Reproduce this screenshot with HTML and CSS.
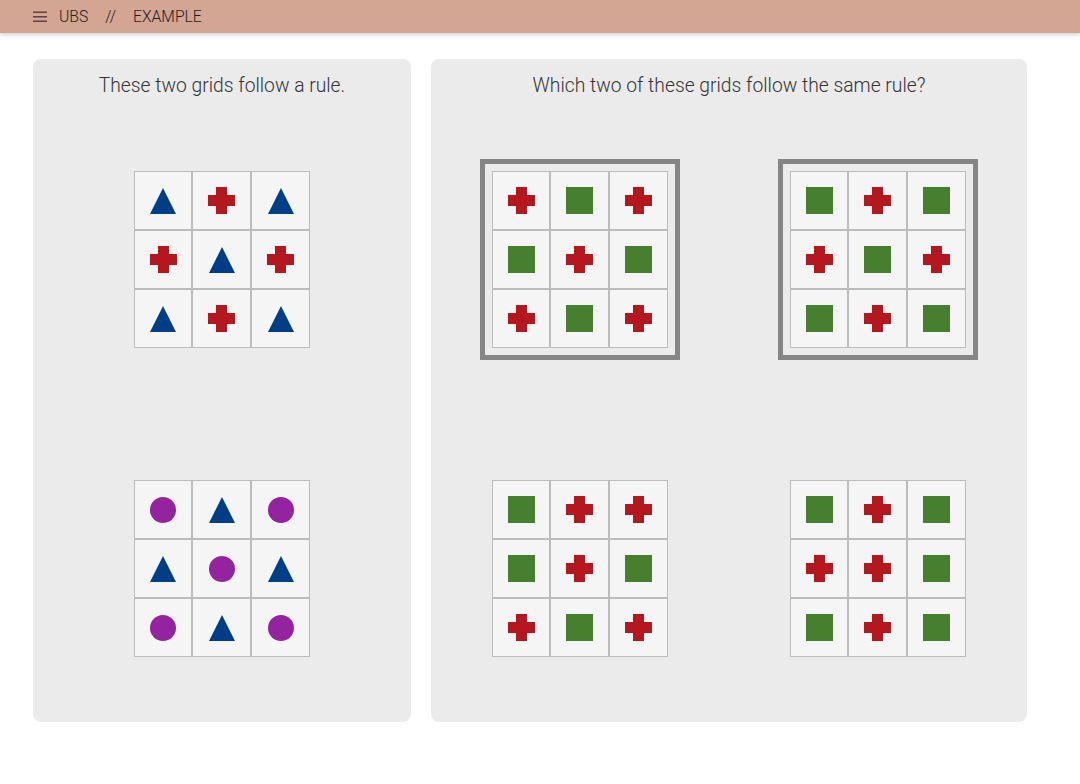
FILE: index.html
```html
<!DOCTYPE html>
<html lang="en">
<head>
  <meta charset="UTF-8" />
  <meta name="viewport" content="width=device-width, initial-scale=1.0"/>
  <title>UBS // Example</title>
  <link rel="stylesheet" href="styles.css">
</head>
<body>
  <header class="topbar">
    <svg class="menu-icon" width="14" height="12" viewBox="0 0 14 12">
      <rect x="0" y="0.5" width="14" height="1.5" />
      <rect x="0" y="5" width="14" height="1.5" />
      <rect x="0" y="9.5" width="14" height="1.5" />
    </svg>
    <span class="crumb">UBS</span>
    <span class="crumb sep">//</span>
    <span class="crumb">EXAMPLE</span>
  </header>

  <main class="board">
    <section class="panel panel-rule">
      <h2>These two grids follow a rule.</h2>
      <div class="grids one-col">
        <div class="frame">
          <div class="grid">
            <div class="cell"><i class="tri"></i></div>
            <div class="cell"><i class="cross"></i></div>
            <div class="cell"><i class="tri"></i></div>
            <div class="cell"><i class="cross"></i></div>
            <div class="cell"><i class="tri"></i></div>
            <div class="cell"><i class="cross"></i></div>
            <div class="cell"><i class="tri"></i></div>
            <div class="cell"><i class="cross"></i></div>
            <div class="cell"><i class="tri"></i></div>
          </div>
        </div>
        <div class="frame">
          <div class="grid">
            <div class="cell"><i class="dot"></i></div>
            <div class="cell"><i class="tri"></i></div>
            <div class="cell"><i class="dot"></i></div>
            <div class="cell"><i class="tri"></i></div>
            <div class="cell"><i class="dot"></i></div>
            <div class="cell"><i class="tri"></i></div>
            <div class="cell"><i class="dot"></i></div>
            <div class="cell"><i class="tri"></i></div>
            <div class="cell"><i class="dot"></i></div>
          </div>
        </div>
      </div>
    </section>

    <section class="panel panel-choice">
      <h2>Which two of these grids follow the same rule?</h2>
      <div class="grids two-col">
        <div class="frame selected">
          <div class="grid">
            <div class="cell"><i class="cross"></i></div>
            <div class="cell"><i class="square"></i></div>
            <div class="cell"><i class="cross"></i></div>
            <div class="cell"><i class="square"></i></div>
            <div class="cell"><i class="cross"></i></div>
            <div class="cell"><i class="square"></i></div>
            <div class="cell"><i class="cross"></i></div>
            <div class="cell"><i class="square"></i></div>
            <div class="cell"><i class="cross"></i></div>
          </div>
        </div>
        <div class="frame selected">
          <div class="grid">
            <div class="cell"><i class="square"></i></div>
            <div class="cell"><i class="cross"></i></div>
            <div class="cell"><i class="square"></i></div>
            <div class="cell"><i class="cross"></i></div>
            <div class="cell"><i class="square"></i></div>
            <div class="cell"><i class="cross"></i></div>
            <div class="cell"><i class="square"></i></div>
            <div class="cell"><i class="cross"></i></div>
            <div class="cell"><i class="square"></i></div>
          </div>
        </div>
        <div class="frame">
          <div class="grid">
            <div class="cell"><i class="square"></i></div>
            <div class="cell"><i class="cross"></i></div>
            <div class="cell"><i class="cross"></i></div>
            <div class="cell"><i class="square"></i></div>
            <div class="cell"><i class="cross"></i></div>
            <div class="cell"><i class="square"></i></div>
            <div class="cell"><i class="cross"></i></div>
            <div class="cell"><i class="square"></i></div>
            <div class="cell"><i class="cross"></i></div>
          </div>
        </div>
        <div class="frame">
          <div class="grid">
            <div class="cell"><i class="square"></i></div>
            <div class="cell"><i class="cross"></i></div>
            <div class="cell"><i class="square"></i></div>
            <div class="cell"><i class="cross"></i></div>
            <div class="cell"><i class="cross"></i></div>
            <div class="cell"><i class="square"></i></div>
            <div class="cell"><i class="square"></i></div>
            <div class="cell"><i class="cross"></i></div>
            <div class="cell"><i class="square"></i></div>
          </div>
        </div>
      </div>
    </section>
  </main>
</body>
</html>
```

FILE: styles.css
```css
body {
  margin: 0;
  font-family: Roboto, "Liberation Sans", sans-serif;
  font-weight: 300;
  background: #fff;
  color: #333;
}

.topbar {
  height: 33px;
  display: flex;
  align-items: center;
  padding-left: 33px;
  background: #d3a593;
  box-shadow: 0 2px 4px rgba(0, 0, 0, 0.18);
  font-size: 15.7px;
  font-weight: 300;
  color: #1e1e1e;
}

.menu-icon {
  fill: #5b4540;
  margin-right: 12px;
}

.crumb.sep {
  margin: 0 17px 0 17px;
}

.board {
  display: flex;
  gap: 20px;
  padding: 26px 0 0 33px;
}

.panel {
  height: 663px;
  background: #ebebeb;
  border-radius: 8px;
  display: flex;
  flex-direction: column;
}

.panel-rule {
  width: 378px;
}

.panel-choice {
  width: 596px;
}

h2 {
  margin: 0;
  padding-top: 14px;
  line-height: 26px;
  font-size: 19.3px;
  font-weight: 300;
  text-align: center;
  color: #333;
}

.grids {
  display: grid;
  margin-top: 60px;
  row-gap: 108px;
  justify-items: center;
}

.one-col {
  grid-template-columns: 1fr;
}

.two-col {
  grid-template-columns: 1fr 1fr;
}

.frame {
  padding: 7px;
  border: 5px solid transparent;
}

.frame.selected {
  border-color: #858585;
}

.grid {
  display: grid;
  width: 176px;
  height: 177px;
  grid-template-columns: 58px 59px 59px;
  grid-template-rows: 59px 59px 59px;
}

.cell {
  background: #f5f5f5;
  border: 1px solid #bcbcbc;
  display: flex;
  align-items: center;
  justify-content: center;
}

.tri {
  width: 0;
  height: 0;
  border-left: 13px solid transparent;
  border-right: 13px solid transparent;
  border-bottom: 26px solid #003f87;
}

.cross {
  width: 27px;
  height: 27px;
  background:
    linear-gradient(#b5171f, #b5171f) center / 11px 100% no-repeat,
    linear-gradient(#b5171f, #b5171f) center / 100% 11px no-repeat;
}

.square {
  width: 27px;
  height: 27px;
  background: #467f2e;
}

.dot {
  width: 26px;
  height: 26px;
  border-radius: 50%;
  background: #94239f;
}
```
